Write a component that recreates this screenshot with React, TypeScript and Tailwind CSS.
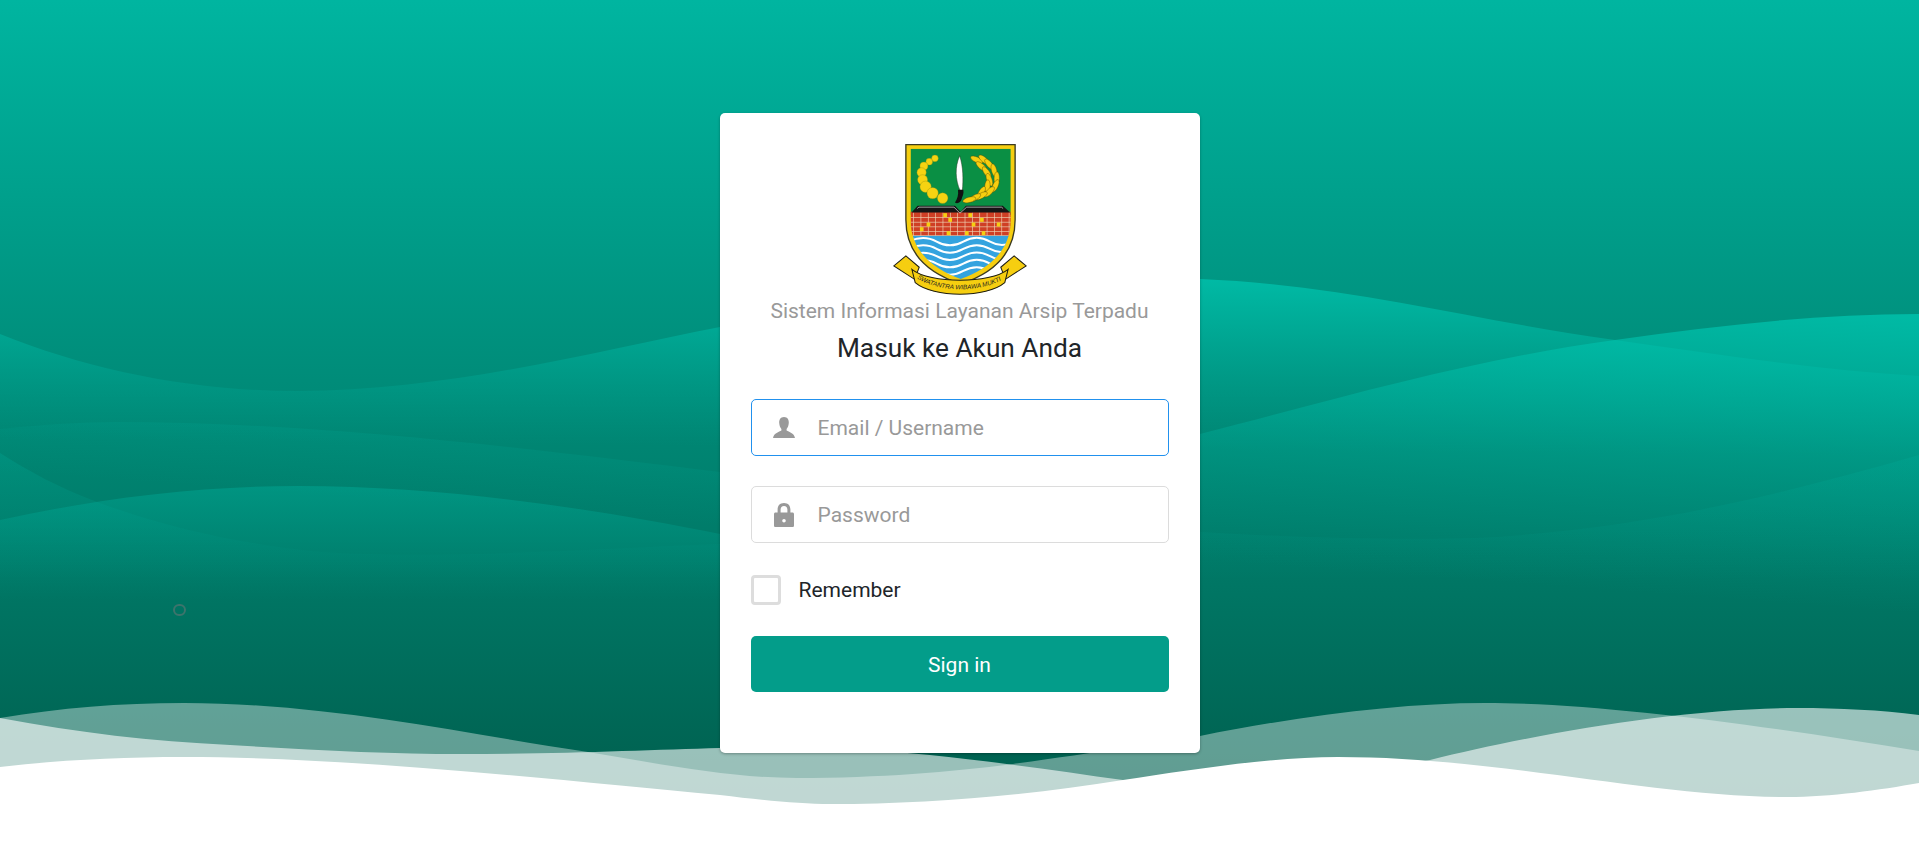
import React from "react";

const Logo = () => {
  const beads: [number, number, number][] = [
    [165, 86, 10], [148, 96, 10], [132, 109, 12], [125, 128, 14], [128, 150, 15],
    [137, 171, 17], [158, 190, 17], [188, 205, 16],
  ];
  const leaves: [number, number, number][] = [
    [290, 90, 25], [312, 90, 40], [328, 104, 50], [304, 110, 40], [342, 122, 75], [320, 128, 55],
    [350, 146, 92], [328, 150, 70], [346, 168, 115], [322, 170, 95], [328, 186, 135], [304, 188, 120],
    [304, 198, 150], [284, 204, 150], [268, 210, 165],
  ];
  const rows = [250, 264, 278, 292, 304];
  const cols = Array.from({ length: 14 }, (_, i) => 100 + i * 22);
  const gold = [[190, 250], [265, 250], [205, 264], [300, 264], [140, 278], [275, 278], [120, 292], [200, 304], [255, 304], [305, 304], [350, 278]];
  return (
    <svg viewBox="40 40 400 455" className="block w-[134px] h-[152px]">
      <defs>
        <clipPath id="inner">
          <path d="M92 57 H392 V270 C392 360 330 415 242 447 C155 415 92 360 92 270 Z" />
        </clipPath>
      </defs>
      <path d="M78 45 H405 V270 C405 370 340 430 242 462 C145 430 78 370 78 270 Z" fill="#f6ce10" stroke="#3a3a20" strokeWidth="4" />
      <g clipPath="url(#inner)">
        <rect x="90" y="55" width="305" height="200" fill="#0a8f44" />
        <rect x="90" y="246" width="305" height="74" fill="#cf3f25" />
        {rows.map((y) => (
          <rect key={y} x="90" y={y + 12} width="305" height="2" fill="#eed0b0" />
        ))}
        {cols.map((x) => (
          <rect key={x} x={x} y="248" width="2" height="70" fill="#eecfb0" />
        ))}
        {gold.map(([x, y]) => (
          <rect key={`${x}-${y}`} x={x} y={y} width="11" height="12" fill="#f6ce10" />
        ))}
        <rect x="90" y="318" width="305" height="135" fill="#34a3df" />
        {[335, 357, 379, 401, 423].map((y) => (
          <path
            key={y}
            d={`M85 ${y} C115 ${y - 14} 145 ${y - 14} 170 ${y} S225 ${y + 14} 250 ${y} S305 ${y - 14} 330 ${y} S380 ${y + 12} 400 ${y}`}
            fill="none"
            stroke="#ffffff"
            strokeWidth="6"
          />
        ))}
      </g>
      <path d="M95 248 L113 228 H225 L242 246 L258 228 H368 L390 248 Z" fill="#151515" />
      <path d="M112 236 L117 232 H222 L240 250 L260 232 H364 L369 236" fill="none" stroke="#e9e9e9" strokeWidth="2" />
      {beads.map(([x, y, r]) => (
        <circle key={`${x}-${y}`} cx={x} cy={y} r={r} fill="#f6d312" stroke="#8a8a10" strokeWidth="1" />
      ))}
      <path d="M239 78 C224 112 226 150 240 182 L247 182 C250 150 250 112 239 78 Z" fill="#ffffff" stroke="#1c3a22" strokeWidth="1.5" />
      <path d="M234 180 H250 C252 192 248 198 246 204 C244 218 232 224 225 218 C232 208 236 196 234 180 Z" fill="#111111" />
      {leaves.map(([x, y, a]) => (
        <ellipse key={`${x}-${y}`} cx={x} cy={y} rx="20" ry="8" fill="#f6ce10" stroke="#5a4a00" strokeWidth="1.2" transform={`rotate(${a} ${x} ${y})`} />
      ))}
      <path d="M42 408 L78 378 L118 412 L104 448 Z" fill="#f6ce10" stroke="#1c1c10" strokeWidth="3" />
      <path d="M438 408 L402 378 L362 412 L376 448 Z" fill="#f6ce10" stroke="#1c1c10" strokeWidth="3" />
      <path d="M96 418 C150 462 330 462 384 418 L374 458 C320 504 160 504 106 458 Z" fill="#f6ce10" stroke="#1c1c10" strokeWidth="3" />
      <path id="bandText" d="M100 436 C165 492 320 492 384 436" fill="none" />
      <text fontFamily="Liberation Sans, sans-serif" fontSize="19" fontStyle="italic" fill="#222222">
        <textPath href="#bandText" startOffset="14">SWATANTRA WIBAWA MUKTI</textPath>
      </text>
    </svg>
  );
};

const Waves = () => (
  <svg className="absolute inset-0 w-[1919px] h-[866px]" viewBox="0 0 1919 866">
    <defs>
      <linearGradient id="gA" gradientUnits="userSpaceOnUse" x1="1200" y1="279" x2="1198.5" y2="450">
        <stop offset="0" stopColor="#00c4ae" stopOpacity="0.78" />
        <stop offset="1" stopColor="#00a896" stopOpacity="0" />
      </linearGradient>
      <linearGradient id="gB" gradientUnits="userSpaceOnUse" x1="1919" y1="314" x2="1897" y2="612">
        <stop offset="0" stopColor="#00c8b2" stopOpacity="0.75" />
        <stop offset="1" stopColor="#00a896" stopOpacity="0" />
      </linearGradient>
      <linearGradient id="gC" gradientUnits="userSpaceOnUse" x1="0" y1="486" x2="0" y2="600">
        <stop offset="0" stopColor="#00b09c" stopOpacity="0.42" />
        <stop offset="1" stopColor="#00a896" stopOpacity="0" />
      </linearGradient>
      <linearGradient id="gD" gradientUnits="userSpaceOnUse" x1="0" y1="453" x2="0" y2="580">
        <stop offset="0" stopColor="#00b09c" stopOpacity="0.25" />
        <stop offset="1" stopColor="#00a896" stopOpacity="0" />
      </linearGradient>
    </defs>
    <path d="M0 334 C90 370 190 391 298 391 C450 391 600 350 720 327 C900 295 1080 279 1200 279 C1350 285 1480 322 1615 340 C1720 355 1820 370 1919 376 L1919 800 L0 800 Z" fill="url(#gA)" />
    <path d="M0 429 C40 425 80 422 115 422 C320 422 540 450 720 472 C880 490 1050 470 1200 434 C1350 395 1480 358 1615 340 C1720 325 1820 314 1919 314 L1919 800 L0 800 Z" fill="url(#gB)" />
    <path d="M0 453 C30 472 60 488 92 500 C170 530 250 545 321 552 C450 560 600 548 720 544 C900 535 1050 530 1200 532 C1300 538 1400 540 1475 538 C1640 530 1780 495 1919 455 L1919 800 L0 800 Z" fill="url(#gD)" />
    <path d="M0 520 C100 498 200 486 298 486 C450 486 600 510 720 534 C850 560 1000 590 1200 600 L1919 640 L1919 800 L0 800 Z" fill="url(#gC)" />
    <path d="M0 718 C60 708 120 703 184 703 C330 703 470 735 588 752 C660 764 730 778 797 778 C880 778 950 772 1013 764 C1100 752 1150 744 1200 736 C1300 716 1400 703 1485 703 C1600 703 1760 725 1919 751 L1919 866 L0 866 Z" fill="#ffffff" fillOpacity="0.38" />
    <path d="M0 718 C80 733 150 741 230 745 C310 750 390 754 460 754 C560 754 650 750 720 748 C790 746 860 748 930 755 C990 761 1060 771 1123 780 C1170 786 1200 788 1230 787 C1300 784 1370 772 1430 760 C1530 735 1680 708 1797 708 C1840 708 1880 710 1919 715 L1919 866 L0 866 Z" fill="#ffffff" fillOpacity="0.6" />
    <path d="M0 767 C60 760 120 757 184 757 C350 757 560 780 720 795 C760 800 800 804 830 804 C930 804 1030 795 1123 780 C1190 770 1270 757 1338 757 C1500 757 1650 797 1788 797 C1830 797 1880 790 1919 783 L1919 866 L0 866 Z" fill="#ffffff" />
  </svg>
);

export default function App() {
  return (
    <div className="relative h-[866px] w-full overflow-hidden bg-[linear-gradient(to_bottom,#00b5a0_0px,#00604f_790px,#00604f_866px)] font-['Roboto',sans-serif]">
      <Waves />
      <div className="absolute left-[173px] top-[604px] h-[12px] w-[13px] rounded-full border-2 border-[#3d746c]" />
      <div className="relative flex justify-center pt-[113px]">
        <div className="flex h-[640px] w-[480px] flex-col rounded-[5px] bg-white px-[31px] pt-[30px] shadow-[0_1px_3px_rgba(0,0,0,0.3)]">
          <div className="flex justify-center">
            <Logo />
          </div>
          <p className="mt-[1px] text-center text-[21px] leading-[30px] text-[#999999]">Sistem Informasi Layanan Arsip Terpadu</p>
          <h1 className="mt-[3px] text-center text-[26.25px] leading-[38px] text-[#212529]">Masuk ke Akun Anda</h1>
          <form className="mt-[32px] flex flex-col">
            <div className="flex h-[57px] items-center rounded-[5px] border border-[#2191ee] bg-white">
              <svg viewBox="0 0 22 21" className="ml-[21px] h-[21px] w-[22px] fill-[#999999]">
                <path d="M11 0 C14.6 0 16 2.8 15.8 5.8 C15.6 8.6 14.8 10.6 13.6 12 L13.6 13.4 C16 15 21 15.6 22 21 L0 21 C1 15.6 6 15 8.4 13.4 L8.4 12 C7.2 10.6 6.4 8.6 6.2 5.8 C6 2.8 7.4 0 11 0 Z" />
              </svg>
              <span className="ml-[23px] pt-[2px] text-[21px] text-[#999999]">Email / Username</span>
            </div>
            <div className="mt-[30px] flex h-[57px] items-center rounded-[5px] border border-[#dcdcdc] bg-white">
              <svg viewBox="0 0 20 24" className="ml-[22px] h-[24px] w-[20px] fill-[#999999]">
                <path fillRule="evenodd" d="M10 0 C14.2 0 16.4 2.8 16.4 6.6 L16.4 9.6 L18.4 9.6 C19.4 9.6 20 10.2 20 11.2 L20 22.4 C20 23.4 19.4 24 18.4 24 L1.6 24 C0.6 24 0 23.4 0 22.4 L0 11.2 C0 10.2 0.6 9.6 1.6 9.6 L3.6 9.6 L3.6 6.6 C3.6 2.8 5.8 0 10 0 Z M6.6 9.6 L13.4 9.6 L13.4 6.8 C13.4 4.4 12.2 3 10 3 C7.8 3 6.6 4.4 6.6 6.8 Z M10 16 A1.8 1.8 0 1 0 10 19.6 A1.8 1.8 0 1 0 10 16 Z" />
              </svg>
              <span className="ml-[24px] pt-[2px] text-[21px] text-[#999999]">Password</span>
            </div>
            <label className="mt-[32px] flex h-[30px] items-center">
              <span className="h-[30px] w-[30px] rounded-[4px] border-[3px] border-[#dddddd] bg-white" />
              <span className="ml-[18px] pt-[2px] text-[21px] text-[#212529]">Remember</span>
            </label>
            <button type="button" className="mt-[31px] h-[56px] rounded-[5px] bg-[#039d8a] pt-[4px] text-[21px] text-white">Sign in</button>
          </form>
        </div>
      </div>
    </div>
  );
}
